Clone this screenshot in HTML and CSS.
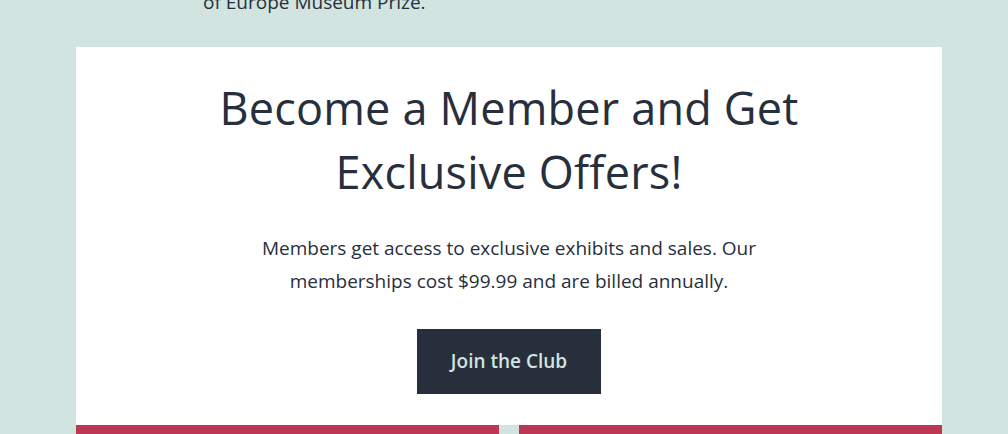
FILE: index.html
```html
<!DOCTYPE html>
<html lang="en">
<head>
<meta charset="utf-8">
<title>Membership</title>
<link rel="stylesheet" href="styles.css">
</head>
<body>
  <section class="intro">
    <p class="intro-text">of Europe Museum Prize.</p>
  </section>
  <main class="wrap">
    <section class="card">
      <h2 class="card-title">Become a Member and Get Exclusive Offers!</h2>
      <p class="card-text">Members get access to exclusive exhibits and sales. Our memberships cost $99.99 and are billed annually.</p>
      <a class="btn" href="#">Join the Club</a>
    </section>
    <div class="tiles">
      <div class="tile"></div>
      <div class="tile"></div>
    </div>
  </main>
</body>
</html>
```

FILE: styles.css
```css
* { box-sizing: border-box; }
html, body { margin: 0; padding: 0; }
body {
  background: #d1e4df;
  color: #272f3c;
  font-family: "Open Sans", "Noto Sans", sans-serif;
  overflow: hidden;
}
.intro {
  padding-left: 203px;
  margin-top: -12px;
}
.intro-text {
  margin: 0;
  font-size: 19px;
  line-height: 28px;
}
.wrap {
  margin: 31px 0 0 76px;
  width: 866px;
}
.card {
  background: #fff;
  padding: 29px 0 31px;
  display: flex;
  flex-direction: column;
  align-items: center;
  text-align: center;
}
.card-title {
  margin: 0;
  font-weight: 400;
  font-size: 45px;
  line-height: 64px;
  letter-spacing: 0.2px;
  max-width: 620px;
}
.card-text {
  margin: 28px 0 0;
  font-size: 19px;
  line-height: 33px;
  max-width: 520px;
}
.btn {
  margin-top: 31px;
  display: inline-block;
  background: #272f3c;
  color: #d1e4df;
  font-weight: 600;
  font-size: 19px;
  text-decoration: none;
  padding: 20px 34px;
  line-height: 25px;
}
.tiles {
  display: grid;
  grid-template-columns: 1fr 1fr;
  gap: 20px;
}
.tile {
  background: #bc3754;
  height: 200px;
}
```
